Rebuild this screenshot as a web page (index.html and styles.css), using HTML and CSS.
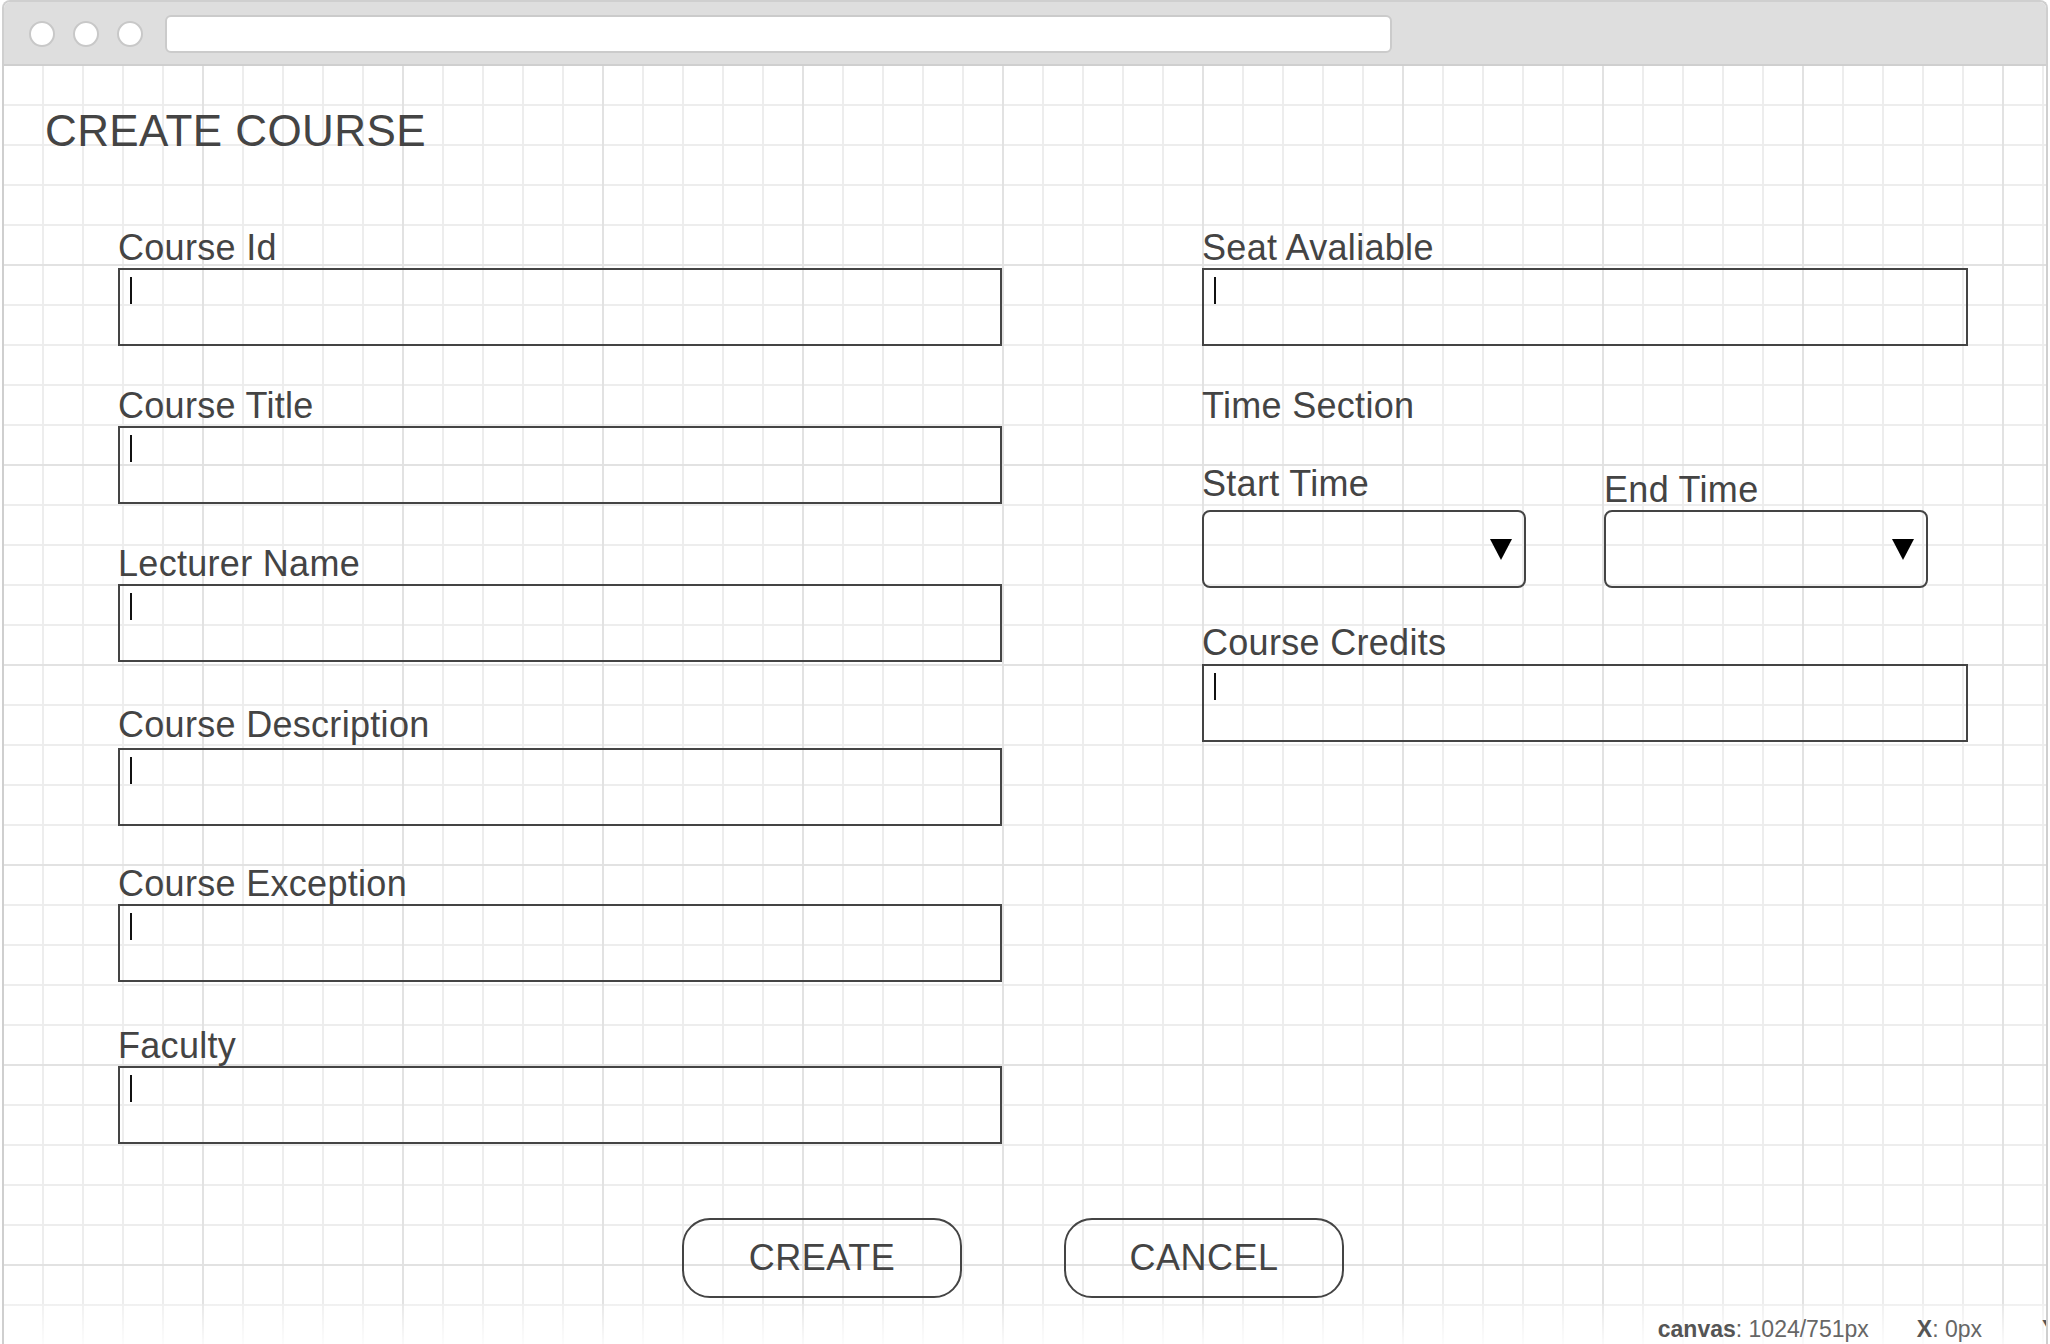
FILE: index.html
```html
<!DOCTYPE html>
<html lang="en">
<head>
<meta charset="utf-8">
<title>Create Course</title>
<link rel="stylesheet" href="styles.css">
</head>
<body>
<div class="window">
  <div class="titlebar">
    <span class="dot"></span>
    <span class="dot"></span>
    <span class="dot"></span>
    <div class="urlbar"></div>
  </div>
  <div class="canvas">
    <h1 class="page-title">CREATE COURSE</h1>
    <div class="form">
      <div class="col col-left">
        <div class="field">
          <label class="label">Course Id</label>
          <div class="input"><span class="caret"></span></div>
        </div>
        <div class="field">
          <label class="label">Course Title</label>
          <div class="input"><span class="caret"></span></div>
        </div>
        <div class="field">
          <label class="label">Lecturer Name</label>
          <div class="input"><span class="caret"></span></div>
        </div>
        <div class="field field-desc">
          <label class="label">Course Description</label>
          <div class="input"><span class="caret"></span></div>
        </div>
        <div class="field field-exc">
          <label class="label">Course Exception</label>
          <div class="input"><span class="caret"></span></div>
        </div>
        <div class="field field-fac">
          <label class="label">Faculty</label>
          <div class="input"><span class="caret"></span></div>
        </div>
      </div>
      <div class="col col-right">
        <div class="field">
          <label class="label">Seat Avaliable</label>
          <div class="input"><span class="caret"></span></div>
        </div>
        <div class="section-title">Time Section</div>
        <div class="time-row">
          <div class="field field-start">
            <label class="label">Start Time</label>
            <div class="select">
              <svg class="arrow" width="22" height="21" viewBox="0 0 22 21"><polygon points="0,0 22,0 11,21" fill="#000"/></svg>
            </div>
          </div>
          <div class="field">
            <label class="label">End Time</label>
            <div class="select">
              <svg class="arrow" width="22" height="21" viewBox="0 0 22 21"><polygon points="0,0 22,0 11,21" fill="#000"/></svg>
            </div>
          </div>
        </div>
        <div class="field field-credits">
          <label class="label">Course Credits</label>
          <div class="input"><span class="caret"></span></div>
        </div>
      </div>
    </div>
    <div class="actions">
      <button class="btn" type="button">CREATE</button>
      <button class="btn" type="button">CANCEL</button>
    </div>
    <div class="statusbar">
      <span class="stat"><b>canvas</b>: 1024/751px</span>
      <span class="stat"><b>X</b>: 0px</span>
      <span class="stat stat-clip"><b>Y</b>: 0px</span>
    </div>
  </div>
</div>
</body>
</html>
```

FILE: styles.css
```css
html, body {
  margin: 0;
  padding: 0;
  background: #ffffff;
  overflow: hidden;
}

body {
  font-family: "Liberation Sans", Arial, sans-serif;
  color: #444444;
}

.window {
  margin-left: 2px;
  width: 2046px;
  height: 1344px;
  box-sizing: border-box;
  border: 2px solid #cfcfcf;
  border-bottom: none;
  border-radius: 8px 8px 0 0;
  display: flex;
  flex-direction: column;
  overflow: hidden;
}

.titlebar {
  flex: none;
  height: 64px;
  box-sizing: border-box;
  padding: 2px 0 0 25px;
  background: #dedede;
  border-bottom: 2px solid #cfcfcf;
  display: flex;
  align-items: center;
  gap: 18px;
}

.dot {
  flex: none;
  width: 26px;
  height: 26px;
  box-sizing: border-box;
  border-radius: 50%;
  background: #ffffff;
  border: 2px solid #c8c8c8;
}

.urlbar {
  flex: none;
  margin-left: 4px;
  width: 1227px;
  height: 38px;
  box-sizing: border-box;
  background: #ffffff;
  border: 2px solid #cbcbcb;
  border-radius: 6px;
}

.canvas {
  flex: 1;
  min-height: 0;
  display: flex;
  flex-direction: column;
  background-color: #ffffff;
  background-image:
    linear-gradient(to right, #e2e2e2 0, #e2e2e2 2px, transparent 2px),
    linear-gradient(to bottom, #e2e2e2 0, #e2e2e2 2px, transparent 2px),
    linear-gradient(to right, #ededed 0, #ededed 2px, transparent 2px),
    linear-gradient(to bottom, #ededed 0, #ededed 2px, transparent 2px);
  background-size: 200px 200px, 200px 200px, 40px 40px, 40px 40px;
  background-position: -2px -2px;
}

.page-title {
  margin: 40px 0 0 41px;
  font-size: 44px;
  line-height: 50px;
  font-weight: normal;
  letter-spacing: 0.4px;
  color: #444444;
}

.form {
  display: flex;
  align-items: flex-start;
  gap: 200px;
  margin: 72px 0 0 114px;
}

.col {
  display: flex;
  flex-direction: column;
  gap: 40px;
}

.col-left {
  width: 884px;
}

.col-right {
  width: 766px;
}

.field {
  display: flex;
  flex-direction: column;
}

.label {
  display: block;
  font-size: 36px;
  line-height: 40px;
  letter-spacing: 0.3px;
  color: #444444;
  white-space: nowrap;
}

.input {
  height: 78px;
  box-sizing: border-box;
  border: 2px solid #444444;
}

.caret {
  display: block;
  width: 2px;
  height: 27px;
  margin: 7px 0 0 10px;
  background: #111111;
}

.field-desc {
  margin-top: 3px;
}

.field-desc .label {
  margin-bottom: 3px;
}

.field-exc {
  margin-top: -2px;
}

.field-fac {
  margin-top: 4px;
}

.section-title {
  font-size: 36px;
  line-height: 40px;
  letter-spacing: 0.3px;
  color: #444444;
}

.time-row {
  display: flex;
  align-items: flex-end;
  gap: 78px;
  margin-top: -2px;
}

.field-start .label {
  margin-bottom: 6px;
}

.select {
  width: 324px;
  height: 78px;
  box-sizing: border-box;
  border: 2px solid #444444;
  border-radius: 8px;
  display: flex;
  align-items: center;
  justify-content: flex-end;
  padding-right: 12px;
}

.arrow {
  display: block;
}

.field-credits {
  margin-top: -5px;
}

.field-credits .label {
  margin-bottom: 1px;
}

.actions {
  display: flex;
  gap: 102px;
  margin: 74px 0 0 678px;
}

.btn {
  width: 280px;
  height: 80px;
  box-sizing: border-box;
  padding: 0;
  border: 2px solid #444444;
  border-radius: 28px;
  background: transparent;
  font-family: "Liberation Sans", Arial, sans-serif;
  font-size: 36px;
  letter-spacing: 0.5px;
  color: #444444;
}

.statusbar {
  margin-top: auto;
  height: 40px;
  box-sizing: border-box;
  padding-bottom: 2px;
  display: flex;
  justify-content: flex-end;
  align-items: flex-end;
  background: linear-gradient(to bottom, rgba(255, 255, 255, 0.2), rgba(255, 255, 255, 0.85));
  font-size: 23px;
  line-height: 26px;
  color: #666666;
  white-space: nowrap;
}

.stat {
  flex: none;
}

.stat b {
  color: #555555;
}

.stat + .stat {
  margin-left: 48px;
}

.stat-clip {
  width: 4px;
  overflow: hidden;
}

.stat + .stat-clip {
  margin-left: 60px;
}
```
